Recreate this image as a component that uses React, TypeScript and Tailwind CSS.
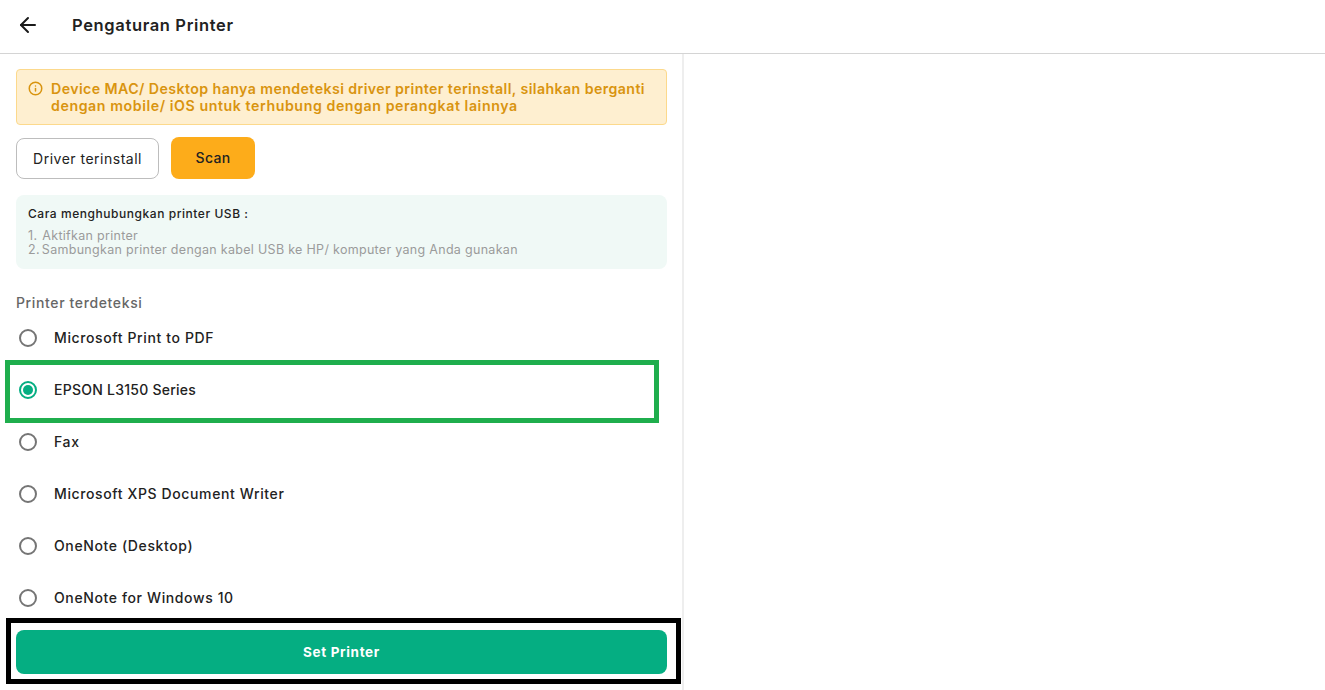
import { ArrowLeft, Info } from 'lucide-react'

const PRINTERS = [
  'Microsoft Print to PDF',
  'EPSON L3150 Series',
  'Fax',
  'Microsoft XPS Document Writer',
  'OneNote (Desktop)',
  'OneNote for Windows 10',
]

const SELECTED = 'EPSON L3150 Series'

function Radio({ checked }: { checked: boolean }) {
  if (checked) {
    return (
      <span className="flex h-[18px] w-[18px] items-center justify-center rounded-full border-2 border-[#05ae82]">
        <span className="h-[10px] w-[10px] rounded-full bg-[#05ae82]" />
      </span>
    )
  }
  return <span className="h-[18px] w-[18px] rounded-full border-2 border-[#757575]" />
}

export default function App() {
  return (
    <div className="relative h-[690px] w-[1325px] overflow-hidden bg-white font-['Inter',sans-serif] text-[#1f1f1f]">
      <header className="flex h-[54px] items-center border-b border-[#d4d4d4] pb-[3px] pl-4">
        <ArrowLeft size={24} strokeWidth={2} className="text-[#1a1a1a]" />
        <h1 className="ml-8 mt-[1px] text-[16.5px] font-semibold tracking-[0.65px] text-[#222]">Pengaturan Printer</h1>
      </header>

      <div className="h-[636px] w-[684px] border-r-2 border-[#eeeeee] px-4 pt-[15px]">
        <div className="flex h-[56px] w-[651px] items-start rounded border border-[#fcd98c] bg-[#feefd0] pl-[11px] pt-[10px] text-[#d9940f]">
          <Info size={15} strokeWidth={2.4} className="mt-[1px] shrink-0" />
          <p className="ml-[8px] text-[14.2px] font-semibold leading-[17px] tracking-[0.41px]">
            Device MAC/ Desktop hanya mendeteksi driver printer terinstall, silahkan berganti
            <br />
            <span className="tracking-[0.57px]">dengan mobile/ iOS untuk terhubung dengan perangkat lainnya</span>
          </p>
        </div>

        <div className="mt-3 flex items-end gap-3">
          <button
            type="button"
            className="h-[41px] w-[143px] rounded-lg border border-[#bdbdbd] bg-white pb-px text-[14px] font-normal tracking-[0.5px] text-[#222]"
          >
            Driver terinstall
          </button>
          <button
            type="button"
            className="h-[42px] w-[84px] rounded-lg bg-[#fdac1a] pb-px text-[14px] font-medium tracking-[0.3px] text-[#222]"
          >
            Scan
          </button>
        </div>

        <div className="mt-4 h-[74px] w-[651px] rounded-lg bg-[#f0f9f6] px-3 pt-[11px]">
          <p className="text-[12px] font-medium leading-[16px] tracking-[0.55px] text-[#222]">Cara menghubungkan printer USB :</p>
          <div className="mt-[7px] text-[12.5px] leading-[14px] tracking-[0.3px] text-[#9b9b9b]">
            <p>
              1.<span className="ml-[5px]">Aktifkan printer</span>
            </p>
            <p>
              2.<span className="ml-[2px]">Sambungkan printer dengan kabel USB ke HP/ komputer yang Anda gunakan</span>
            </p>
          </div>
        </div>

        <p className="mb-px mt-[25px] text-[14px] font-medium leading-[17px] tracking-[0.63px] text-[#666]">Printer terdeteksi</p>

        <div>
          {PRINTERS.map((name) => (
            <label key={name} className="flex h-[52px] items-center pl-[3px]">
              <Radio checked={name === SELECTED} />
              <span
                className={`mb-px ml-[17px] text-[14px] font-medium text-[#222] ${
                  name === SELECTED ? 'tracking-[0.25px]' : 'tracking-[0.62px]'
                }`}
              >
                {name}
              </span>
            </label>
          ))}
        </div>

        <button
          type="button"
          className="mt-[6px] h-[44px] w-[651px] rounded-lg bg-[#05ae82] text-[13.5px] font-bold tracking-[0.65px] text-white"
        >
          Set Printer
        </button>
      </div>

      {/* annotation boxes drawn over the screenshot */}
      <div className="pointer-events-none absolute left-[5px] top-[360px] h-[63px] w-[654px] border-[5px] border-[#1fae4d]" />
      <div className="pointer-events-none absolute left-[6px] top-[618px] h-[66px] w-[675px] border-[5px] border-black" />
    </div>
  )
}
